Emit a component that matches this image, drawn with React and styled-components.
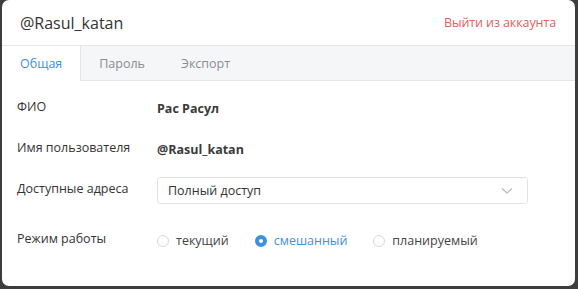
import React, { useState } from 'react';
import styled, { createGlobalStyle } from 'styled-components';

const GlobalStyle = createGlobalStyle`
  html, body {
    margin: 0;
    padding: 0;
    background: #3b3d40;
    font-family: "Open Sans", "Noto Sans", sans-serif;
  }
`;

const MODES = ['текущий', 'смешанный', 'планируемый'];
const TABS = ['Общая', 'Пароль', 'Экспорт'];

function App() {
    const [tab, setTab] = useState(0);
    const [mode, setMode] = useState(1);

    return (
        <Page>
            <GlobalStyle />
            <Modal>
                <Header>
                    <Title>@Rasul_katan</Title>
                    <Logout>Выйти из аккаунта</Logout>
                </Header>
                <Tabs>
                    {TABS.map((t, i) => (
                        <Tab key={t} active={i === tab} onClick={() => setTab(i)}>{t}</Tab>
                    ))}
                </Tabs>
                <Body>
                    <Row>
                        <Label>ФИО</Label>
                        <Value>Рас Расул</Value>
                    </Row>
                    <Row>
                        <Label>Имя пользователя</Label>
                        <Value>@Rasul_katan</Value>
                    </Row>
                    <Row>
                        <Label>Доступные адреса</Label>
                        <Select>
                            <span>Полный доступ</span>
                            <svg width="12" height="8" viewBox="0 0 12 8">
                                <path d="M1 1.5 L6 6 L11 1.5" fill="none" stroke="#b5b8bd" strokeWidth="1.1" />
                            </svg>
                        </Select>
                    </Row>
                    <ModeRow>
                        <Label>Режим работы</Label>
                        <Radios>
                            {MODES.map((m, i) => (
                                <Radio key={m} checked={i === mode} onClick={() => setMode(i)}>
                                    <Dot checked={i === mode} />
                                    {m}
                                </Radio>
                            ))}
                        </Radios>
                    </ModeRow>
                </Body>
            </Modal>
        </Page>
    );
}

const Page = styled.div`
    width: 578px;
    height: 289px;
    padding: 0 3px 3px 2px;
    box-sizing: border-box;
`;

const Modal = styled.div`
    background: #fff;
    border-radius: 7px;
    height: 286px;
    overflow: hidden;
`;

const Header = styled.div`
    height: 46px;
    display: flex;
    align-items: center;
    justify-content: space-between;
    padding: 0 19px 0 18px;
    border-bottom: 1px solid #e3e5e8;
    box-sizing: border-box;
`;

const Title = styled.div`
    font-size: 16px;
    color: #333;
`;

const Logout = styled.a`
    font-size: 12.5px;
    color: #e4605e;
    cursor: pointer;
    letter-spacing: -0.1px;
`;

const Tabs = styled.div`
    height: 35px;
    display: flex;
    background: #f5f6f8;
    border-bottom: 1px solid #e3e5e8;
    box-sizing: border-box;
`;

const Tab = styled.div`
    padding: 0 18px;
    display: flex;
    align-items: center;
    font-size: 12.5px;
    cursor: pointer;
    color: ${p => (p.active ? '#3d8fe0' : '#8a8d92')};
    background: ${p => (p.active ? '#fff' : 'transparent')};
    border-right: ${p => (p.active ? '1px solid #e3e5e8' : 'none')};
    height: ${p => (p.active ? '35px' : '34px')};
    min-width: ${p => (p.active ? '77px' : 'auto')};
    box-sizing: border-box;
`;

const Body = styled.div`
    padding: 7px 0 0 15px;
    display: flex;
    flex-direction: column;
`;

const Row = styled.div`
    display: flex;
    align-items: center;
    height: 41px;
`;

const ModeRow = styled(Row)`
    margin-top: 9px;
`;

const Label = styled.div`
    width: 140px;
    font-size: 12.5px;
    color: #333;
    margin-top: -4px;
`;

const Value = styled.div`
    font-size: 12.5px;
    font-weight: 700;
    color: #3a3a3a;
`;

const Select = styled.div`
    width: 371px;
    height: 27px;
    border: 1px solid #e1e3e6;
    border-radius: 3px;
    box-sizing: border-box;
    display: flex;
    align-items: center;
    justify-content: space-between;
    padding: 0 14px 0 10px;
    font-size: 12.5px;
    color: #333;
`;

const Radios = styled.div`
    display: flex;
    align-items: center;
    gap: 26px;
`;

const Radio = styled.label`
    display: flex;
    align-items: center;
    gap: 7px;
    font-size: 12.5px;
    cursor: pointer;
    color: ${p => (p.checked ? '#3d8fe0' : '#444')};
`;

const Dot = styled.span`
    width: 12px;
    height: 12px;
    border-radius: 50%;
    box-sizing: border-box;
    border: ${p => (p.checked ? '4px solid #3d8fe0' : '1px solid #d6d8dc')};
    background: #fff;
`;

export default App;
